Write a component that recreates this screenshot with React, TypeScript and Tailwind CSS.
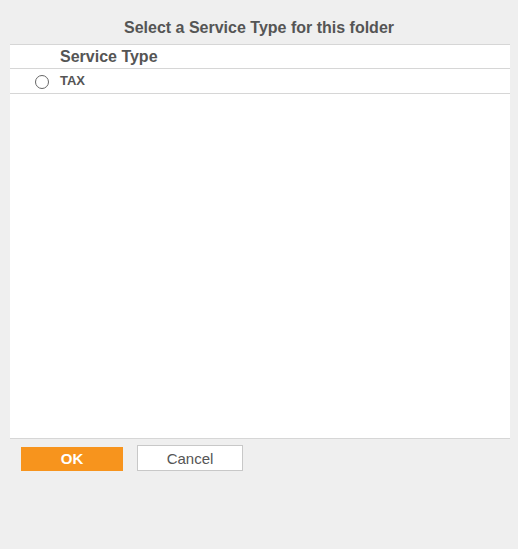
export default function App() {
  return (
    <div className="w-[518px] h-[549px] bg-[#efefef] font-['Liberation_Sans',Arial,sans-serif] text-[#555]">
      <div className="h-[44px] flex items-center justify-center pt-[12px]">
        <h1 className="text-[16px] font-bold text-[#555]">Select a Service Type for this folder</h1>
      </div>
      <div className="ml-[10px] w-[500px] h-[395px] bg-white border-t border-b border-[#d6d6d6] flex flex-col">
        <div className="h-[24px] border-b border-[#d6d6d6] flex items-center pl-[50px]">
          <span className="text-[16px] font-bold text-[#555]">Service Type</span>
        </div>
        <div className="h-[25px] border-b border-[#d6d6d6] flex items-center">
          <span className="ml-[25px] mt-[2px] w-[14px] h-[14px] rounded-full border border-[#666] bg-white" />
          <span className="ml-[11px] text-[13px] font-bold text-[#555]">TAX</span>
        </div>
      </div>
      <div className="flex items-end pl-[21px] pt-[6px] gap-[14px]">
        <button className="w-[102px] h-[24px] bg-[#f7941d] text-white font-bold text-[15px]">OK</button>
        <button className="w-[106px] h-[26px] bg-white border border-[#c8c8c8] text-[#555] text-[15px] pt-[2px]">Cancel</button>
      </div>
    </div>
  );
}
